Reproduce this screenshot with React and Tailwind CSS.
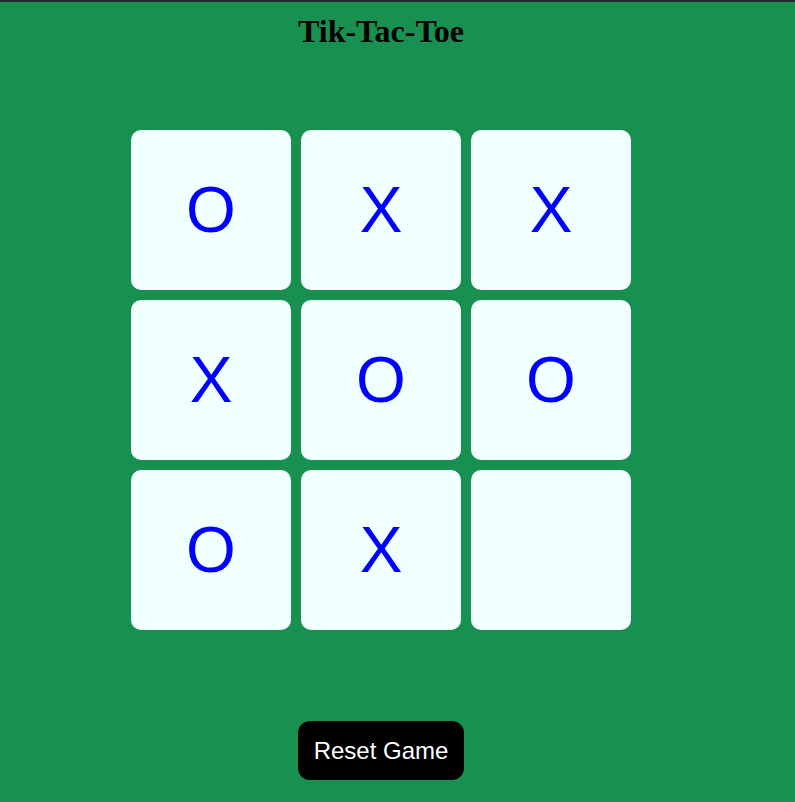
import React from "react";

const cells = ["O", "X", "X", "X", "O", "O", "O", "X", ""];

export default function App() {
  return (
    <div className="min-h-[802px] w-[795px] bg-[#18904f]">
      <div className="h-[2px] bg-[#1e2a2e]" />
      <div className="w-[762px] flex flex-col items-center">
        <h1
          className="mt-[5px] text-[32px] font-bold leading-normal text-black"
          style={{ fontFamily: '"Liberation Serif", serif' }}
        >
          Tik-Tac-Toe
        </h1>
        <div className="mt-[75px] grid grid-cols-[160px_160px_160px] gap-[10px]">
          {cells.map((c, i) => (
            <div
              key={i}
              className="flex h-[160px] w-[160px] items-center justify-center rounded-[10px] bg-[#f0ffff] text-[64px] text-[#0000ff]"
              style={{ fontFamily: '"Liberation Sans", Arial, sans-serif' }}
            >
              {c}
            </div>
          ))}
        </div>
        <button
          className="mt-[91px] rounded-[12px] bg-black px-4 py-4 text-[24px] leading-[27px] text-white"
          style={{ fontFamily: '"Liberation Sans", Arial, sans-serif' }}
        >
          Reset Game
        </button>
      </div>
    </div>
  );
}
